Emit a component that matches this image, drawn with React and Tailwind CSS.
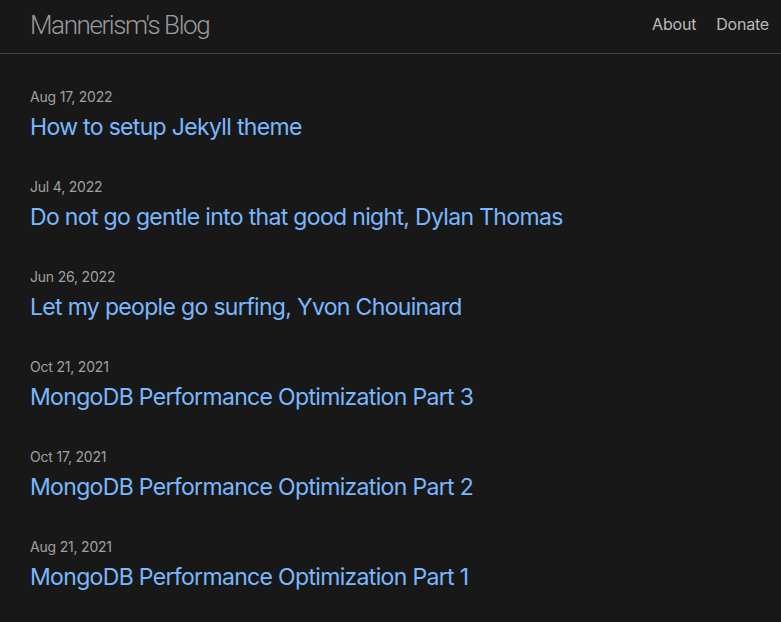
import React from "react";

const posts = [
  ["Aug 17, 2022", "How to setup Jekyll theme"],
  ["Jul 4, 2022", "Do not go gentle into that good night, Dylan Thomas"],
  ["Jun 26, 2022", "Let my people go surfing, Yvon Chouinard"],
  ["Oct 21, 2021", "MongoDB Performance Optimization Part 3"],
  ["Oct 17, 2021", "MongoDB Performance Optimization Part 2"],
  ["Aug 21, 2021", "MongoDB Performance Optimization Part 1"],
];

export default function App() {
  return (
    <div
      className="min-h-[622px] bg-[#181818] text-[#bbbbbb]"
      style={{ fontFamily: "Inter, 'Noto Sans', sans-serif" }}
    >
      <header className="h-[54px] border-b border-[#404040] flex items-center justify-between pl-[30px] pr-[12px]">
        <a
          className="text-[26px] font-light tracking-[-1.4px] text-[#9b9b9b] leading-[53px] -mt-[2px]"
          style={{ fontFamily: "Roboto, sans-serif" }}
        >
          Mannerism's Blog
        </a>
        <nav className="flex gap-[20px] text-[16px] text-[#bbbbbb] leading-6 -mt-[5px] tracking-[-0.2px]">
          <a>About</a>
          <a>Donate</a>
        </nav>
      </header>
      <main className="pt-[31px] px-[30px]">
        <ul>
          {posts.map(([date, title]) => (
            <li key={title} className="mb-[30px]">
              <div className="text-[14px] leading-6 text-[#a0a0a0] tracking-[-0.2px]">{date}</div>
              <h3 className="text-[23px] leading-9 text-[#79b8ff] tracking-[-0.67px]">
                <a>{title}</a>
              </h3>
            </li>
          ))}
        </ul>
      </main>
    </div>
  );
}
